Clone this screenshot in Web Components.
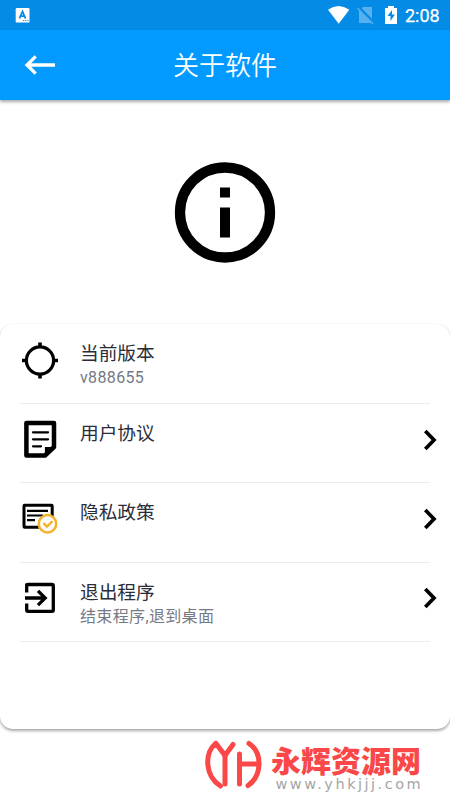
<!DOCTYPE html>
<html lang="zh-CN"><head><meta charset="utf-8"><title>关于软件</title>
<style>html,body{margin:0;height:100%;background:#fff}body{font-family:Roboto,"Noto Sans CJK SC",sans-serif;overflow:hidden}</style></head>
<body><about-page></about-page>
<script>
const define=(name,html)=>{
  const t=document.createElement('template');t.innerHTML=html;
  customElements.define(name,class extends HTMLElement{
    constructor(){super();this.attachShadow({mode:'open'}).append(t.content.cloneNode(true));}
  });
};
define('status-bar',`<style>
:host{display:flex;height:30px;background:#048be5;color:#fff;align-items:center;padding:0 10px 0 15px;box-sizing:border-box}
svg{display:block;flex:none}.gap{flex:1}.time{font:400 18px/28px Roboto,sans-serif;-webkit-text-stroke:.25px #fff;height:30px;padding-top:2px;box-sizing:border-box;width:35px;white-space:nowrap}
</style>
<svg width="15" height="30" viewBox="15 0 15 30"><rect x="15.7" y="8" width="13.8" height="14.6" rx="1.2" fill="#fff"/><path d="M19.400 18.500L22.500 11.500L25.500 18.500M20.500 16.200H24.500" fill="none" stroke="#048be5" stroke-width="1.800"/><path d="M23 20.600h1.200m1 0h1.200m1 0h1.200" stroke="#048be5"/></svg>
<span class="gap"></span>
<svg width="77" height="30" viewBox="328 0 77 30"><path d="M328 9.700Q338.500 2.500 349.300 9.700L338.700 23.800Z" fill="#fff"/><path d="M363 7h9v16h-13V11z" fill="#58b1ee"/><path d="M358.500 7L374 23" stroke="#048be5" stroke-width="3"/><path d="M357.500 8.200L373 23.900" stroke="#58b1ee" stroke-width="1.400"/><path d="M385 8h3V6h6v2h3v16h-12z" fill="#fff"/><path d="M392 10l-4.500 6h3v5l4.500-6.500h-3z" fill="#048be5"/></svg>
<span class="time">2:08</span>`);
define('title-bar',`<style>
:host{display:grid;grid-template-columns:80px 1fr 80px;height:70px;align-items:center;background:#029aff;color:#fff;box-shadow:0 2px 3px #0005;text-align:center;font-size:26px;line-height:36px}
svg{display:block}.title{font-weight:350;padding-top:2px}
</style><svg width="80" height="70" viewBox="0 30 80 70"><path d="M55 65H27M35.700 56.300L27 65L35.700 73.700" fill="none" stroke="#fff" stroke-width="3.300"/></svg><span class="title"><slot></slot></span>`);
define('info-hero',`<style>:host{display:flex;height:224px;align-items:center;justify-content:center}svg{display:block}</style>
<svg width="102" height="102" viewBox="0 0 102 102"><circle cx="51" cy="51.500" r="45" fill="none" stroke="#000" stroke-width="10.300"/><path d="M46 26.500h10v10H46zm0 20h10v30H46z"/></svg>`);
define('list-card',`<style>:host{display:block;box-sizing:border-box;height:405px;padding:0 20px;border-radius:13px;background:#fff;box-shadow:0 2px 3px #0005,0 0 1px #0002}</style><slot></slot>`);
define('list-row',`<style>
:host{display:grid;grid-template-columns:60px 1fr;height:79.400px;box-sizing:border-box;border-bottom:1px solid #ececed;position:relative}
:host(:first-child){height:80px}
.icon{padding-top:15.500px}.text{padding-top:17px}.name{display:block;font-size:18.700px;line-height:26px;color:#2a2d39}.sub{display:block;font-size:16px;line-height:22px;color:#747986;letter-spacing:.35px}
</style><div class="icon"><slot name="icon"></slot></div><div class="text"><span class="name"><slot name="name"></slot></span><span class="sub"><slot name="sub"></slot></span></div><slot name="end"></slot>`);
define('row-arrow',`<style>:host{position:absolute;right:-8px;top:24.500px}svg{display:block}</style><svg width="16" height="22" viewBox="0 0 16 22"><path d="M3.300 2L12 11L3.300 20" fill="none" stroke="#000" stroke-width="3.700"/></svg>`);
const icon=(name,body)=>define(name,`<style>:host{display:block;width:40px;height:40px}svg{display:block}</style><svg width="40" height="40" viewBox="0 0 40 40" fill="none" stroke="#000">${body}</svg>`);
icon('target-icon','<circle cx="20" cy="20.500" r="13.600" stroke-width="3.200"/><path stroke-width="3.600" d="M20 2.500v5M20 33.500v5M2 20.500h5M33 20.500h5"/>');
icon('document-icon','<path stroke-width="4.500" stroke-linejoin="round" d="M6.400 3H34V27L25 35.500H6.400z"/><path d="M25.500 35V27.500h8" fill="#000" stroke-width="1.200"/><path stroke-width="2.300" stroke-linecap="round" d="M13 12.300h15M13 19.300h15M13 26.300h8"/>');
icon('policy-icon','<rect x="4" y="6.300" width="28.200" height="22" rx=".7" stroke-width="3"/><path stroke-width="2.200" d="M7 11.800h21M7 16.500h16M7 21.200h8"/><circle cx="27.500" cy="24.700" r="8.700" fill="#fff" stroke="#f4b32c" stroke-width="2.500"/><path stroke="#f4b32c" stroke-width="2.400" stroke-linecap="round" stroke-linejoin="round" d="M24 24.700l3 3 4.800-4.800"/>');
icon('exit-icon','<path stroke-width="3.300" d="M6.700 14.500V6.700Q6.700 6.500 8 6.500H32Q33.300 6.500 33.300 8V32Q33.300 33.300 32 33.300H8Q6.700 33.300 6.700 32V25.500M5 20h19.500M18 12.800L25.200 20L18 27.200"/>');
define('site-brand',`<style>
:host{display:grid;grid-template-columns:58px 160px;column-gap:9px;padding:9px 0 0 204px;height:60px}
svg{display:block}.name{font:900 30px/34px "Noto Sans CJK SC",sans-serif;color:#fa4747;white-space:nowrap}.url{font:14.500px/16px "DejaVu Sans","Liberation Sans",sans-serif;letter-spacing:2.500px;color:#a5a5a5;padding-left:4.500px;white-space:nowrap}.words{padding-top:4px}
</style><svg width="58" height="52" viewBox="203 738 58 52" fill="none" stroke="#fa4747" stroke-width="5" stroke-linecap="round" stroke-linejoin="round"><path d="M214.500 743.500C203 754 204 776 219.500 786M215 743.500L224 755.500L232 744.500M248 743.500C262 753 261 776 247 785.500"/><path d="M224 755.500V784M238.500 754V784M238.500 764H257"/></svg><div class="words"><div class="name">永辉资源网</div><div class="url">www.yhkjjj.com</div></div>`);
define('about-page',`<style>:host{display:block;width:450px;height:800px;background:#fff}</style>
<status-bar></status-bar><title-bar>关于软件</title-bar><info-hero></info-hero>
<list-card>
<list-row><target-icon slot="icon"></target-icon><span slot="name">当前版本</span><span slot="sub">v888655</span></list-row>
<list-row><document-icon slot="icon"></document-icon><span slot="name">用户协议</span><row-arrow slot="end"></row-arrow></list-row>
<list-row><policy-icon slot="icon"></policy-icon><span slot="name">隐私政策</span><row-arrow slot="end"></row-arrow></list-row>
<list-row><exit-icon slot="icon"></exit-icon><span slot="name">退出程序</span><span slot="sub">结束程序,退到桌面</span><row-arrow slot="end"></row-arrow></list-row>
</list-card><site-brand></site-brand>`);
</script></body></html>
